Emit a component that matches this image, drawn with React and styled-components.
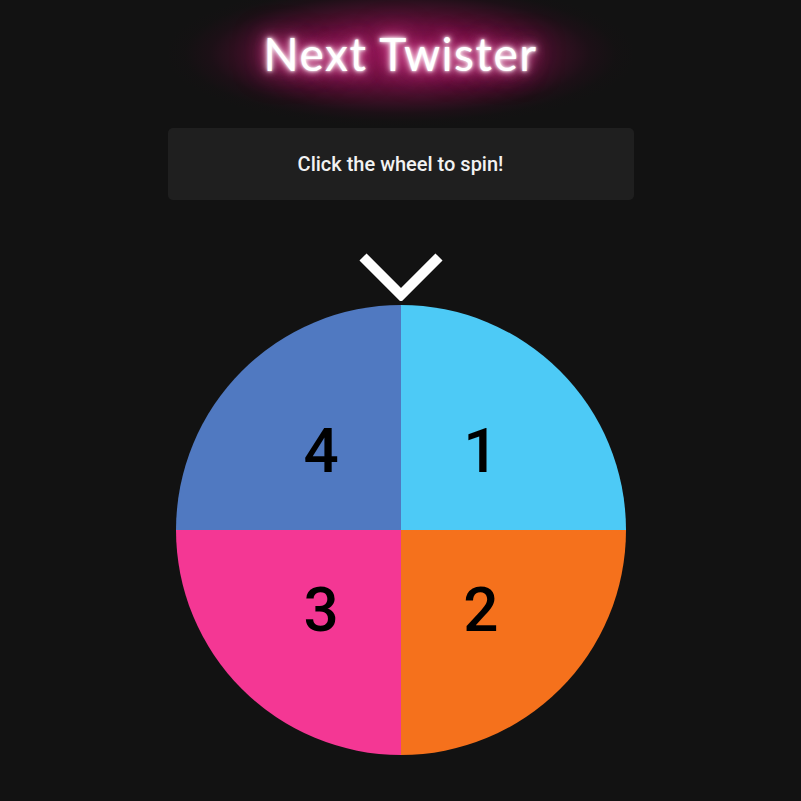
import React from "react";
import styled, { createGlobalStyle } from "styled-components";

const Global = createGlobalStyle`
  html, body { margin: 0; padding: 0; background: #121212; }
  body { font-family: Roboto, "Liberation Sans", sans-serif; color: #fff; }
`;

const Page = styled.main`
  display: flex;
  flex-direction: column;
  align-items: center;
  padding-top: 24px;
  min-height: 801px;
  box-sizing: border-box;
`;

const Title = styled.h1`
  position: relative;
  z-index: 0;
  margin: 0;
  font-family: Lato, "Open Sans", sans-serif;
  font-weight: 400;
  font-size: 46px;
  line-height: 60px;
  letter-spacing: 1.5px;
  color: #fff;
  text-shadow:
    0 0 3px #fff,
    0 0 6px #fff,
    0 0 12px #ff8cc4,
    0 0 20px #e0368a,
    0 0 32px #c8207a;

  &::before {
    content: "";
    position: absolute;
    z-index: -1;
    left: -95px;
    right: -95px;
    top: -42px;
    bottom: -42px;
    background: radial-gradient(
      ellipse at center,
      rgba(150, 22, 88, 0.85) 0%,
      rgba(130, 18, 76, 0.72) 28%,
      rgba(100, 14, 58, 0.5) 45%,
      rgba(55, 10, 34, 0.28) 58%,
      rgba(30, 14, 22, 0.12) 66%,
      rgba(18, 18, 18, 0) 72%
    );
  }
`;

const Card = styled.div`
  margin-top: 44px;
  width: 466px;
  height: 72px;
  box-sizing: border-box;
  background: #1f1f1f;
  border-radius: 5px;
  display: flex;
  align-items: center;
  justify-content: center;
  font-size: 20px;
  font-weight: 500;
  color: #f2f2f2;
`;

const WheelArea = styled.div`
  margin-top: 53px;
  display: flex;
  flex-direction: column;
  align-items: center;
  cursor: pointer;
`;

const Pointer = styled.svg`
  display: block;
  width: 84px;
  height: 48px;
`;

const Wheel = styled.svg`
  display: block;
  width: 450px;
  height: 450px;
  margin-top: 4px;
`;

const segments = [
  { label: "1", color: "#4dcaf6", start: -90 },
  { label: "2", color: "#f5711c", start: 0 },
  { label: "3", color: "#f43794", start: 90 },
  { label: "4", color: "#5079c1", start: 180 },
];

function arcPath(cx, cy, r, a0, a1) {
  const rad = (a) => (a * Math.PI) / 180;
  const x0 = cx + r * Math.cos(rad(a0));
  const y0 = cy + r * Math.sin(rad(a0));
  const x1 = cx + r * Math.cos(rad(a1));
  const y1 = cy + r * Math.sin(rad(a1));
  return `M${cx} ${cy} L${x0} ${y0} A${r} ${r} 0 0 1 ${x1} ${y1} Z`;
}

export default function App() {
  return (
    <>
      <Global />
      <Page>
        <Title>Next Twister</Title>
        <Card>Click the wheel to spin!</Card>
        <WheelArea>
          <Pointer viewBox="0 0 84 48">
            <polyline
              points="4,4 42,42 80,4"
              fill="none"
              stroke="#fff"
              strokeWidth="10"
              strokeLinejoin="miter"
            />
          </Pointer>
          <Wheel viewBox="0 0 450 450">
            {segments.map((s) => {
              const mid = ((s.start + 45) * Math.PI) / 180;
              const tx = 225 + 113 * Math.cos(mid);
              const ty = 225 + 113 * Math.sin(mid);
              return (
                <g key={s.label}>
                  <path d={arcPath(225, 225, 225, s.start, s.start + 90)} fill={s.color} />
                  <text
                    x={tx}
                    y={ty}
                    textAnchor="middle"
                    dominantBaseline="central"
                    fontFamily="Roboto, sans-serif"
                    fontWeight="500"
                    fontSize="62"
                    fill="#000"
                  >
                    {s.label}
                  </text>
                </g>
              );
            })}
          </Wheel>
        </WheelArea>
      </Page>
    </>
  );
}
